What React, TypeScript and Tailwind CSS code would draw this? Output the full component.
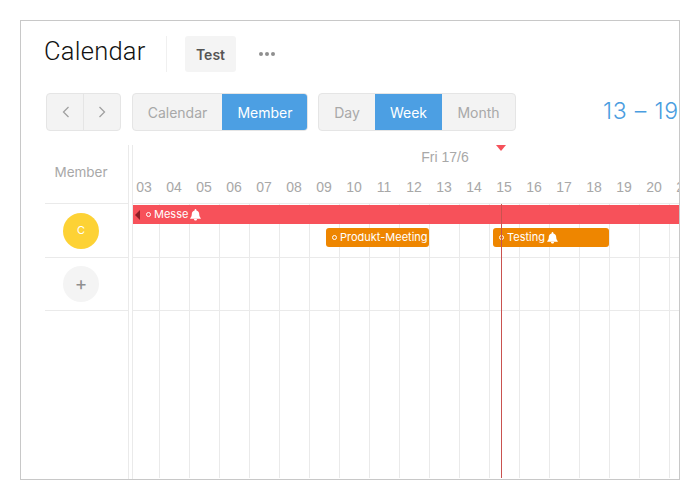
import React from "react";

const hours = ["03","04","05","06","07","08","09","10","11","12","13","14","15","16","17","18","19","20","21"];

function Bell() {
  return (
    <svg width="11" height="12" viewBox="0 0 11 12" className="shrink-0 block" fill="#fff">
      <path d="M5.500 0c.5 0 .9.4.9.9v.5c1.700.4 2.800 1.800 2.800 3.600 0 2 .5 2.900 1.500 3.900.3.3.1.8-.3.8H.6c-.4 0-.6-.5-.3-.8 1-1 1.500-1.900 1.500-3.900 0-1.800 1.100-3.200 2.800-3.600V.9c0-.5.4-.9.9-.9z" />
      <path d="M4 10h3c0 .9-.7 1.600-1.500 1.600S4 10.900 4 10z" />
    </svg>
  );
}

function Ring() {
  return <span className="block w-[5px] h-[5px] rounded-full border border-white shrink-0" />;
}

export default function App() {
  return (
    <div className="w-[700px] h-[500px] bg-white p-[20px] font-['Inter',sans-serif]">
      <div className="w-[660px] h-[460px] border border-[#c8c8c8] overflow-hidden flex flex-col">
        <div className="flex items-center h-[36px] mt-[15px] shrink-0">
          <div className="ml-[23px] w-[122px] shrink-0 -mt-[6px] text-[25.5px] font-light text-[#111111] font-['Roboto',sans-serif] tracking-[0.25px]">Calendar</div>
          <div className="w-px h-[36px] bg-[#f0f0f0] shrink-0" />
          <div className="ml-[18px] w-[51px] h-[36px] shrink-0 rounded-[3px] bg-[#f4f4f4] flex items-center justify-center text-[14px] font-semibold text-[#555555]">Test</div>
          <div className="ml-[23px] flex gap-[2px]">
            <span className="w-[4px] h-[4px] rounded-full bg-[#8f8f8f]" />
            <span className="w-[4px] h-[4px] rounded-full bg-[#8f8f8f]" />
            <span className="w-[4px] h-[4px] rounded-full bg-[#8f8f8f]" />
          </div>
        </div>

        <div className="flex items-center h-[38px] mt-[21px] shrink-0 ml-[25px]">
          <div className="flex shrink-0 w-[75px] h-[38px] rounded-[4px] border border-[#e5e5e5] bg-[#f3f3f3] overflow-hidden">
            <div className="w-[37px] border-r border-[#e5e5e5] flex items-center justify-center pb-[1px] pl-[1px]">
              <svg width="8" height="12" viewBox="0 0 8 12" fill="none" stroke="#a0a0a0" strokeWidth="1.3"><path d="M6.500 1 1.500 6l5 5" /></svg>
            </div>
            <div className="flex-1 flex items-center justify-center pb-[1px]">
              <svg width="8" height="12" viewBox="0 0 8 12" fill="none" stroke="#a0a0a0" strokeWidth="1.3"><path d="M1.500 1l5 5-5 5" /></svg>
            </div>
          </div>
          <div className="flex shrink-0 ml-[11px] h-[38px] w-[176px] rounded-[4px] border border-[#e5e5e5] bg-[#f3f3f3] overflow-hidden">
            <div className="w-[89px] flex items-center justify-center text-[14px] text-[#a8a8a8]">Calendar</div>
            <div className="w-[86px] -my-px -mr-px flex items-center justify-center text-[14px] bg-[#4c9fe3] text-white">Member</div>
          </div>
          <div className="flex shrink-0 ml-[10px] h-[38px] w-[198px] rounded-[4px] border border-[#e5e5e5] bg-[#f3f3f3] overflow-hidden">
            <div className="w-[56px] flex items-center justify-center text-[14px] text-[#a8a8a8]">Day</div>
            <div className="w-[67px] -my-px flex items-center justify-center text-[14px] bg-[#4c9fe3] text-white">Week</div>
            <div className="w-[73px] flex items-center justify-center text-[14px] text-[#a8a8a8]">Month</div>
          </div>
          <div className="ml-[87px] shrink-0 -mt-[2px] whitespace-nowrap text-[23px] font-light text-[#4a9de0] tracking-[0.8px]">13 – 19</div>
        </div>

        <div className="flex flex-1 min-h-0 mt-[14px] ml-[24px]">
          <div className="w-[84px] shrink-0 border-r border-[#eaeaea] mr-[3px]">
            <div className="h-[59px] border-b border-[#eaeaea] flex items-center justify-center pb-[3px] pr-[11px] text-[13.5px] text-[#a8a8a8]">Member</div>
            <div className="h-[54px] border-b border-[#eaeaea] flex items-center justify-center pr-[11px]">
              <div className="w-[36px] h-[36px] rounded-full bg-[#fdd235] flex items-center justify-center text-[11px] text-white">C</div>
            </div>
            <div className="h-[53px] border-b border-[#eaeaea] flex items-center justify-center pr-[11px]">
              <div className="w-[36px] h-[36px] rounded-full bg-[#f4f4f4] flex items-center justify-center pb-[2px] text-[19px] leading-none text-[#8f8f8f]">+</div>
            </div>
          </div>

          <div className="relative flex-1 min-w-0 border-l border-[#eaeaea] overflow-hidden">
            <div className="h-[59px] relative">
              <div className="absolute left-[287px] top-[2px] w-[50px] text-center text-[14px] whitespace-nowrap text-[#a8a8a8] font-['Liberation_Sans',sans-serif]">Fri 17/6</div>
              <div className="absolute left-[363px] top-0 w-0 h-0 border-l-[5px] border-r-[5px] border-t-[6px] border-l-transparent border-r-transparent border-t-[#f5515a]" />
              <div className="absolute left-[-4px] bottom-[6px] flex">
                {hours.map((h) => (
                  <div key={h} className="w-[30px] shrink-0 text-center text-[14px] text-[#a8a8a8] font-['Liberation_Sans',sans-serif]">{h}</div>
                ))}
              </div>
            </div>

            <div className="relative h-[calc(100%-59px)] border-t border-[#eaeaea] -mt-px">
              <div className="absolute inset-0 flex -ml-[3px]">
                {hours.map((h) => (
                  <div key={h} className="w-[30px] shrink-0 h-full border-r border-[#eaeaea]" />
                ))}
              </div>

              <div className="relative h-[54px] border-b border-[#eaeaea]">
                <div className="absolute left-0 right-0 top-[1px] h-[19px] bg-[#f7515a] flex items-center text-white">
                  <span className="ml-[2px] w-0 h-0 border-y-[5px] border-r-[5px] border-y-transparent border-r-[#8c1f25]" />
                  <span className="ml-[6px]"><Ring /></span>
                  <span className="ml-[3px] text-[11px] whitespace-nowrap">Messe</span>
                  <span className="ml-[2px]"><Bell /></span>
                </div>
                <div className="absolute left-[193px] w-[103px] top-[24px] h-[19px] rounded-[3px] bg-[#ee8600] flex items-center text-white">
                  <span className="ml-[6px]"><Ring /></span>
                  <span className="ml-[3px] text-[11px] whitespace-nowrap">Produkt-Meeting</span>
                </div>
                <div className="absolute left-[360px] w-[116px] top-[24px] h-[19px] rounded-[3px] bg-[#ee8600] flex items-center text-white">
                  <span className="ml-[6px]"><Ring /></span>
                  <span className="ml-[3px] text-[11px] whitespace-nowrap">Testing</span>
                  <span className="ml-[2px]"><Bell /></span>
                </div>
              </div>
              <div className="relative h-[53px] border-b border-[#eaeaea]" />

              <div className="absolute left-[368px] top-0 bottom-0 w-px bg-[#c9524f]" />
            </div>
          </div>
        </div>
      </div>
    </div>
  );
}
